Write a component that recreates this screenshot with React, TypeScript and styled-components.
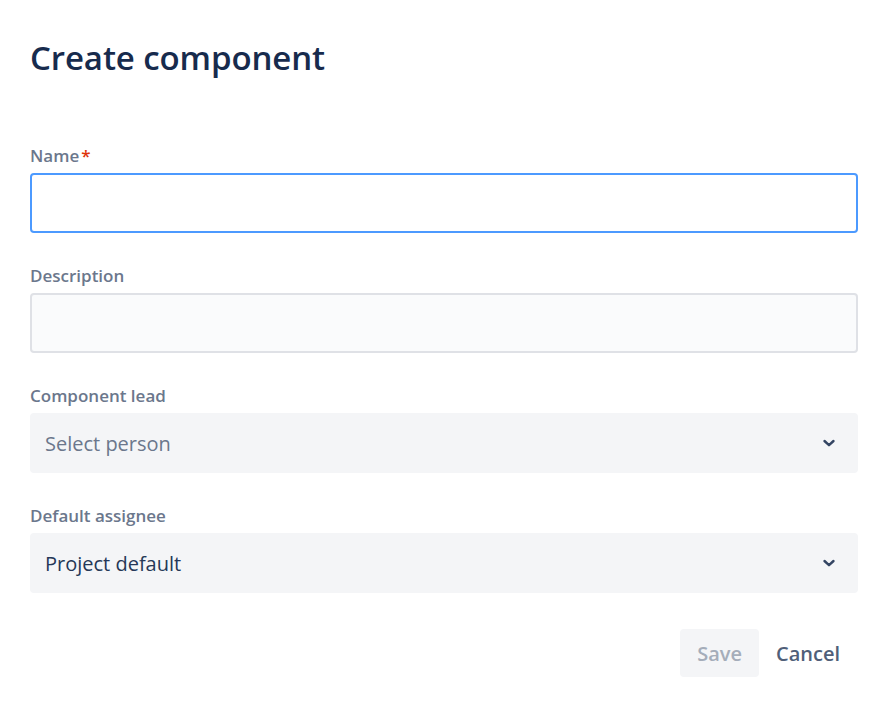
import React from "react";
import styled, { createGlobalStyle } from "styled-components";

const GlobalStyle = createGlobalStyle`
  body {
    margin: 0;
    background: #ffffff;
    font-family: "Open Sans", "Noto Sans", "Liberation Sans", sans-serif;
  }
`;

const Page = styled.div`
  width: 887px;
  height: 702px;
  box-sizing: border-box;
  padding: 36px 29px 0 30px;
  display: flex;
  flex-direction: column;
`;

const Title = styled.h1`
  margin: 0 0 64px;
  font-size: 33px;
  line-height: 44px;
  font-weight: 600;
  color: #172b4d;
  letter-spacing: -0.1px;
`;

const Field = styled.div`
  display: flex;
  flex-direction: column;
  gap: 5px;
  margin-bottom: 31px;
`;

const Label = styled.label`
  font-size: 17px;
  line-height: 24px;
  font-weight: 600;
  color: #6b778c;
`;

const Required = styled.span`
  color: #de350b;
  margin-left: 2px;
`;

const TextInput = styled.div<{ $focused?: boolean }>`
  height: 60px;
  box-sizing: border-box;
  border-radius: 4px;
  border: 2px solid ${(p) => (p.$focused ? "#4c9aff" : "#dfe1e6")};
  background: ${(p) => (p.$focused ? "#ffffff" : "#fafbfc")};
`;

const Select = styled.div<{ $placeholder?: boolean }>`
  height: 60px;
  box-sizing: border-box;
  border-radius: 4px;
  background: #f4f5f7;
  display: flex;
  align-items: center;
  justify-content: space-between;
  padding: 0 22px 0 15px;
  font-size: 20px;
  color: ${(p) => (p.$placeholder ? "#6b778c" : "#253858")};
`;

const Chevron = () => (
  <svg width="14" height="10" viewBox="0 0 14 10">
    <path
      d="M2.5 3 L7 7.2 L11.5 3"
      fill="none"
      stroke="#344563"
      strokeWidth="2.4"
      strokeLinecap="round"
      strokeLinejoin="round"
    />
  </svg>
);

const Actions = styled.div`
  display: flex;
  justify-content: flex-end;
  margin-top: 5px;
  padding-right: 1px;
`;

const Button = styled.button<{ $disabled?: boolean }>`
  height: 48px;
  padding: 0 17px;
  border: none;
  border-radius: 4px;
  font-family: inherit;
  font-size: 20px;
  font-weight: 600;
  background: ${(p) => (p.$disabled ? "#f4f5f7" : "transparent")};
  color: ${(p) => (p.$disabled ? "#a5adba" : "#505f79")};
`;

export default function App() {
  return (
    <>
      <GlobalStyle />
      <Page>
        <Title>Create component</Title>
        <Field>
          <Label>
            Name<Required>*</Required>
          </Label>
          <TextInput $focused />
        </Field>
        <Field>
          <Label>Description</Label>
          <TextInput />
        </Field>
        <Field>
          <Label>Component lead</Label>
          <Select $placeholder>
            Select person
            <Chevron />
          </Select>
        </Field>
        <Field>
          <Label>Default assignee</Label>
          <Select>
            Project default
            <Chevron />
          </Select>
        </Field>
        <Actions>
          <Button $disabled>Save</Button>
          <Button>Cancel</Button>
        </Actions>
      </Page>
    </>
  );
}
